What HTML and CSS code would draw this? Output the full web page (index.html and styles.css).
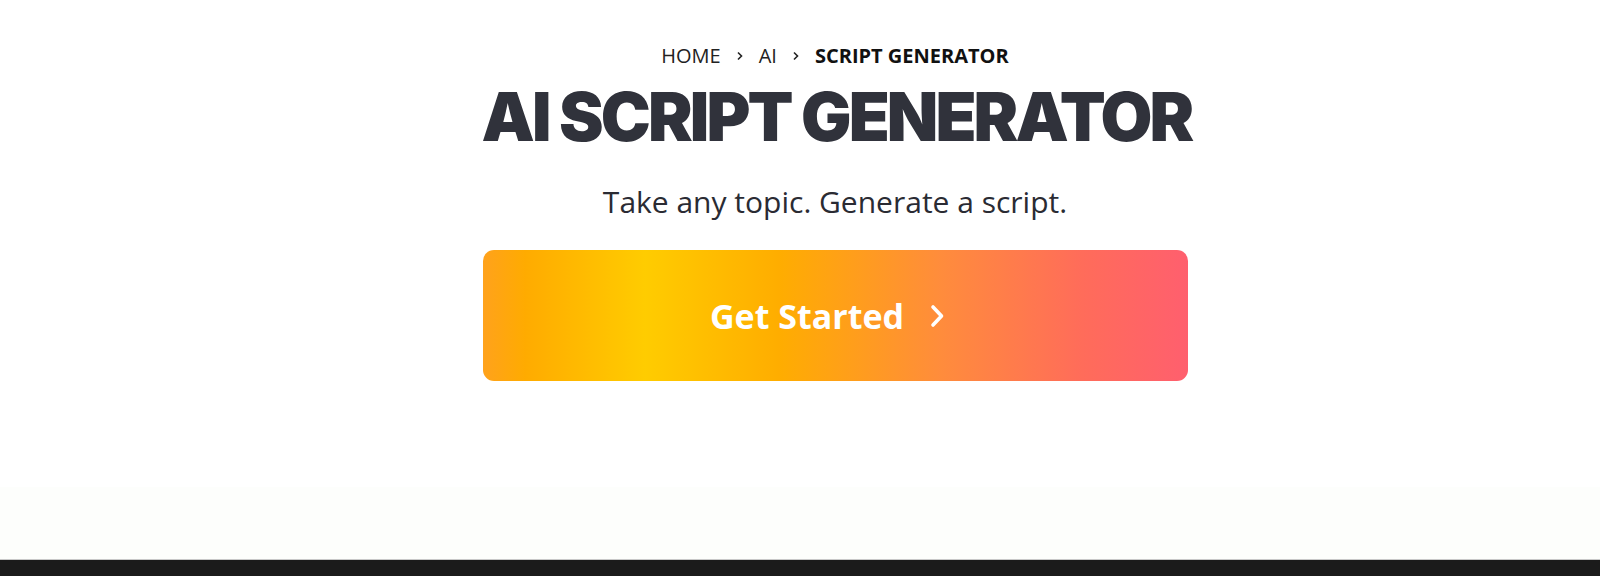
FILE: index.html
```html
<!DOCTYPE html>
<html>
<head>
<meta charset="utf-8">
<link rel="stylesheet" href="styles.css">
</head>
<body>
<main class="page">
  <section class="hero">
    <nav class="crumbs">
      <span class="crumb">HOME</span>
      <svg class="sep" viewBox="0 0 10 10" width="10" height="10"><path d="M3 1.5 L6.5 5 L3 8.5" fill="none" stroke="#222" stroke-width="1.6"/></svg>
      <span class="crumb">AI</span>
      <svg class="sep" viewBox="0 0 10 10" width="10" height="10"><path d="M3 1.5 L6.5 5 L3 8.5" fill="none" stroke="#222" stroke-width="1.6"/></svg>
      <span class="crumb current">SCRIPT GENERATOR</span>
    </nav>
    <h1 class="title">AI SCRIPT GENERATOR</h1>
    <p class="lead">Take any topic. Generate a script.</p>
    <a class="cta" href="#">
      <span>Get Started</span>
      <svg class="chev" viewBox="0 0 18 24" width="18" height="24"><path d="M5 3 L13.5 12 L5 21" fill="none" stroke="#fff" stroke-width="3.6" stroke-linecap="round" stroke-linejoin="round"/></svg>
    </a>
  </section>
  <div class="fade"></div>
  <footer class="footer"></footer>
</main>
</body>
</html>
```
FILE: styles.css
```css
html, body {
  margin: 0;
  padding: 0;
  background: #fff;
}
.page {
  display: flex;
  flex-direction: column;
  height: 576px;
  overflow: hidden;
}
.hero {
  display: flex;
  flex-direction: column;
  align-items: center;
  padding-top: 42px;
  padding-left: 70px;
  height: 487px;
  box-sizing: border-box;
}
.crumbs {
  display: flex;
  align-items: center;
  gap: 14px;
  font-family: "Open Sans", sans-serif;
  font-size: 20px;
  line-height: 28px;
  color: #222;
}
.crumb.current {
  font-weight: 700;
  color: #111;
}
.title {
  margin: 9px 0 0;
  padding-left: 3px;
  font-family: "Inter", sans-serif;
  font-weight: 900;
  font-size: 67px;
  line-height: 76px;
  color: #30323b;
  letter-spacing: -2.9px;
}
.lead {
  margin: 27px 0 0;
  font-family: "Open Sans", sans-serif;
  font-size: 30px;
  line-height: 40px;
  color: #2a2b33;
}
.cta {
  margin-top: 28px;
  width: 705px;
  height: 131px;
  border-radius: 11px;
  display: flex;
  align-items: center;
  justify-content: center;
  gap: 24px;
  text-decoration: none;
  color: #fff;
  font-family: "Open Sans", sans-serif;
  font-weight: 700;
  font-size: 34px;
  background: linear-gradient(90deg, #ffa21c 0%, #ffab00 6%, #ffcc00 23%, #ffad00 42%, #ff8c3c 65%, #ff6c5a 85%, #ff5f6e 100%);
}
.chev {
  display: block;
  margin-right: 14px;
}
.fade {
  height: 72px;
  background: #fdfefc;
}
.footer {
  border-top: 1px solid #c8c8c8;
  flex: 1;
  background: #1b1b1b;
}
```
